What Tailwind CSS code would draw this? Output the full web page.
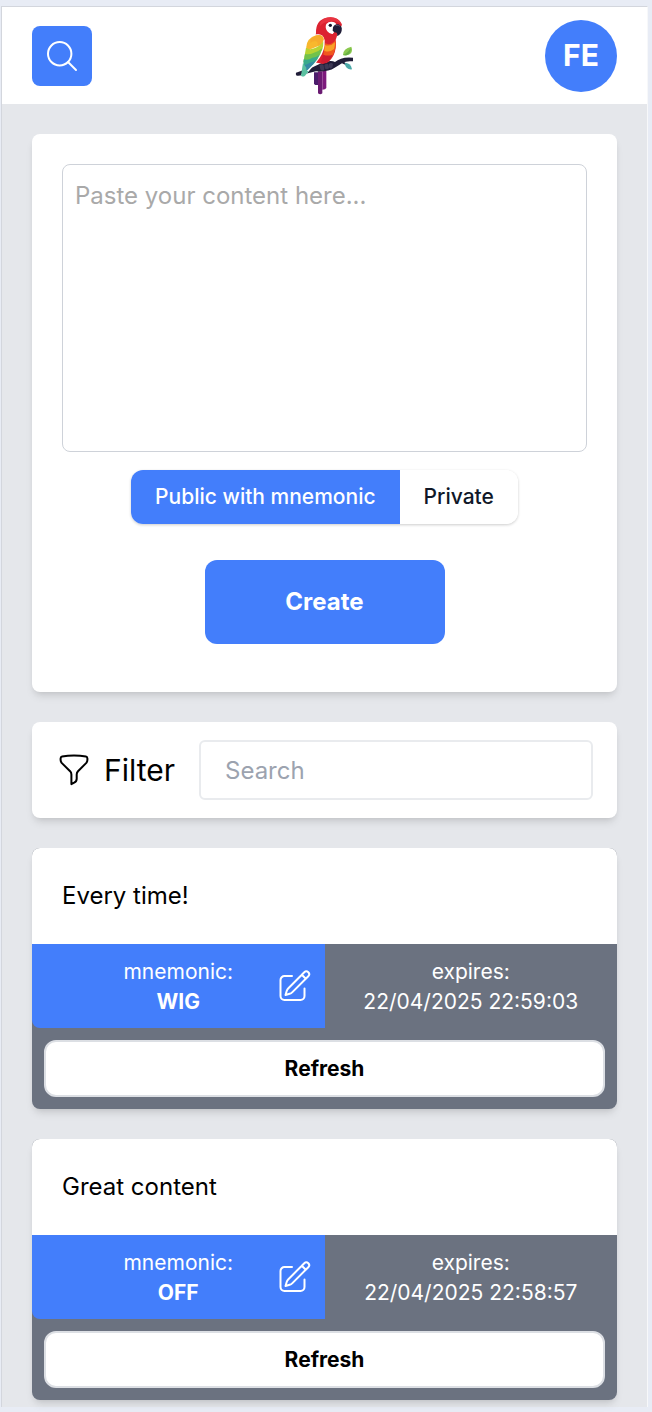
<!DOCTYPE html>
<html lang="en">
<head>
<meta charset="utf-8">
<meta name="viewport" content="width=device-width, initial-scale=1">
<title>Clipboard</title>
<script src="https://cdn.jsdelivr.net/npm/@tailwindcss/browser@4"></script>
</head>
<body class="bg-[#e8ecf5] pt-[6px] pr-1 pb-[5px] pl-px font-['Inter',sans-serif] text-black">
<div class="border-t border-l border-r border-t-[#d3d6dd] border-l-[#d3d6dd] border-r-[#f7f8fa] bg-[#e5e7eb] pb-[7px]">
  <header class="grid grid-cols-3 items-center bg-white px-[30px] py-px">
    <button type="button" aria-label="Search" class="grid size-[60px] place-items-center rounded-lg bg-[#437efb] text-white">
      <svg class="size-9" viewBox="0 0 36 36" fill="none" stroke="currentColor" stroke-width="2" stroke-linecap="round"><circle cx="15.7" cy="15.7" r="11.7"/><path d="M24 24l8 8"/></svg>
    </button>
    <a href="#" aria-label="Home" class="justify-self-center">
      <svg class="h-[95px] w-20" viewBox="0 0 240 285">
        <path d="M87 193h12v38h-8q-4-1-4-5z" fill="#4b1d6b"/><path d="M99 190h13v66q-6 6-13 0z" fill="#6a1b72"/><path d="M112 186h12v54q-2 5-12 5z" fill="#7d1a7d"/>
        <path d="M33 194q18-7 40-12l32-15q31-13 45-5 7-6 18-10 14-5 36-3v11q-20-2-31 4-12 8-24 15-19 13-56 11l-31 7q-14 8-27 6-4-5-2-9z" fill="#201d38"/>
        <path d="M174 160l8 5 6 4-4 3-15-7z" fill="#201d38"/>
        <path d="M174 141q0-20 25-25 6 16-5 23-10 5-20 2z" fill="#8bc94f"/><path d="M174 141q13-4 23-20 0 15-8 19-8 3-15 1z" fill="#68b045"/>
        <path d="M179 165q18-2 22 19-19 2-22-19z" fill="#4ba9a8"/>
        <path d="M93 74Q92 37 124 29q33-7 47 21l-12 25-7 21q3 25-6 45-10 22-32 27l-29-6z" fill="#dc2230"/>
        <path d="M106 43q14-19 42-14 17 4 23 21-18-16-40-9-18 2-26 13z" fill="#e83340"/>
        <path d="M120 106q18 8 32-10 2 22-5 38-9 22-22 30l-13-3z" fill="#f1581e"/>
        <path d="M119 111q18 6 31-8 0 12-3 20-15 12-29 5z" fill="#f9a126"/>
        <path d="M115 140q14 5 28 0-8 19-20 26l-15-4z" fill="#cf1c31"/>
        <path d="M124 48q8-9 21-6 9 2 10 12-3 16-12 24-9 1-16-8-8-11-3-22z" fill="#fff"/>
        <circle cx="136" cy="52" r="5" fill="#17142b"/>
        <path d="M144 58q5-11 16-9 13 6 10 19-2 11-14 16 2-6-1-10-8 0-12-6z" fill="#201d38"/><path d="M152 53q8-4 13 2" fill="none" stroke="#56516a" stroke-width="3"/>
        <path d="M65 113q3-27 30-34 20-4 24 18 2 28-15 53-16 22-47 56-7 0-9-4 8-12 9-40 4-25 8-49z" fill="#fff"/>
        <path d="M64 116q2-25 29-34 20-5 23 12l-6 16-47 19z" fill="#f8b82d"/>
        <path d="M76 94q10-11 27-13 12 1 13 13l-4 13-15 7q4-11-4-14-12-2-17 5z" fill="#f6ac2c"/>
        <path d="M63 119q9 7 20 3 19-3 32-22 1 14-4 27l-15 19-31 10-7-8z" fill="#b8d332"/>
        <path d="M60 138q14 3 25-3 16-4 27-15-4 19-16 35l-33 16-8-9z" fill="#72c24b"/>
        <path d="M56 154q14 4 26-5 12 0 21-9-6 17-19 30l-29 16z" fill="#38aa8c"/>
        <path d="M54 172q12-1 20-8 10 0 20-9-14 21-31 36l-10-4z" fill="#3589a4"/>
        <path d="M54 165l-6 38q6 5 12 0l12-14q-10 1-8-10z" fill="#5bc0a0"/>
        <path d="M103 172q7-7 13 0l2 13q-7 6-12-1zM118 171q8-7 13-1l1 11q-7 6-13 0zM132 168q8-6 12 1l-2 10q-7 5-10-1z" fill="#3d3854"/>
      </svg>
    </a>
    <button type="button" aria-label="Account FE" class="grid size-[72px] place-items-center justify-self-end rounded-full bg-[#437efb] text-[30px] font-bold text-white">FE</button>
  </header>

  <main class="flex flex-col gap-[30px] px-[30px] pt-[30px]">
    <form class="flex flex-col items-center rounded-lg bg-white px-[30px] pt-[30px] pb-12 shadow-[0_6px_9px_-2px_rgba(0,0,0,0.1),0_3px_6px_-3px_rgba(0,0,0,0.1)]">
      <textarea aria-label="Content" placeholder="Paste your content here..." class="block h-72 w-full resize-none rounded-lg border border-[#ced2d9] px-3 py-[13px] text-[24px] leading-[36px] placeholder:text-[#a9a9a9]"></textarea>
      <div class="mt-[18px] flex overflow-hidden rounded-xl text-[21px] leading-[30px] font-medium shadow-[0_1px_3px_rgba(0,0,0,0.2)]">
        <button type="button" aria-pressed="true" class="bg-[#437efb] px-6 py-3 text-white">Public with mnemonic</button>
        <button type="button" aria-pressed="false" class="bg-white px-6 py-3 text-gray-900">Private</button>
      </div>
      <button type="button" class="mt-9 h-[84px] w-60 rounded-xl bg-[#437efb] text-[24px] font-bold text-white">Create</button>
    </form>

    <section class="flex items-center rounded-lg bg-white px-6 py-[18px] shadow-[0_6px_9px_-2px_rgba(0,0,0,0.1),0_3px_6px_-3px_rgba(0,0,0,0.1)]">
      <svg class="size-9 shrink-0" viewBox="0 0 36 36" fill="none" stroke="currentColor" stroke-width="2" stroke-linejoin="round"><path d="M18 3.600c4.100 0 8 .3 11.900 1 .9.2 1.500.9 1.500 1.800v1.500c0 1.200-.5 2.300-1.300 3.200l-8.100 8.100c-.9.9-1.300 2-1.300 3.200v4.300c0 1.700-1 3.300-2.500 4l-2.800 1.400v-9.700c0-1.200-.5-2.300-1.300-3.200l-8.200-8.100c-.8-.9-1.300-2-1.300-3.200V6.400c0-.9.600-1.600 1.500-1.800 3.900-.7 7.900-1 11.900-1Z"/></svg>
      <label for="filter" class="ml-3 text-[30px] leading-[42px]">Filter</label>
      <input id="filter" type="text" placeholder="Search" class="ml-6 h-[60px] min-w-0 flex-1 rounded-md border-2 border-[#e9ebee] px-6 text-[24px] placeholder:text-[#9ca3af]">
    </section>

    <article class="overflow-hidden rounded-lg bg-[#6b7280] shadow-[0_6px_9px_-2px_rgba(0,0,0,0.1),0_3px_6px_-3px_rgba(0,0,0,0.1)]">
      <p class="bg-white p-[30px] text-[24px] leading-[36px]">Every time!</p>
      <div class="grid grid-cols-2 text-center text-[21px] leading-[30px] text-white">
        <div class="grid grid-cols-[1fr_auto_1fr] items-center rounded-bl-lg bg-[#437efb] pt-[13px] pb-[11px]">
          <p class="col-start-2">mnemonic:<br><strong class="font-bold">WIG</strong></p>
          <button type="button" aria-label="Edit mnemonic" class="mr-3 justify-self-end">
            <svg class="size-9" viewBox="0 0 36 36" fill="none" stroke="currentColor" stroke-width="2" stroke-linecap="round" stroke-linejoin="round"><path d="M15 7H7.500a4 4 0 0 0-4 4v16a4 4 0 0 0 4 4h16a4 4 0 0 0 4-4v-7.500M24.800 5.700l2.500-2.500a2.800 2.800 0 0 1 4 4L15.400 23.100a6.700 6.700 0 0 1-2.800 1.700L8.500 26l1.200-4a6.700 6.700 0 0 1 1.700-2.800zm0 0l4 4"/></svg>
          </button>
        </div>
        <p class="pt-[13px] pb-[11px]">expires:<br>22/04/2025 22:59:03</p>
      </div>
      <div class="p-3"><button type="button" class="h-[57px] w-full rounded-xl border-2 border-[#dcdfe4] bg-white text-[21px] font-bold">Refresh</button></div>
    </article>

    <article class="overflow-hidden rounded-lg bg-[#6b7280] shadow-[0_6px_9px_-2px_rgba(0,0,0,0.1),0_3px_6px_-3px_rgba(0,0,0,0.1)]">
      <p class="bg-white p-[30px] text-[24px] leading-[36px]">Great content</p>
      <div class="grid grid-cols-2 text-center text-[21px] leading-[30px] text-white">
        <div class="grid grid-cols-[1fr_auto_1fr] items-center rounded-bl-lg bg-[#437efb] pt-[13px] pb-[11px]">
          <p class="col-start-2">mnemonic:<br><strong class="font-bold">OFF</strong></p>
          <button type="button" aria-label="Edit mnemonic" class="mr-3 justify-self-end">
            <svg class="size-9" viewBox="0 0 36 36" fill="none" stroke="currentColor" stroke-width="2" stroke-linecap="round" stroke-linejoin="round"><path d="M15 7H7.500a4 4 0 0 0-4 4v16a4 4 0 0 0 4 4h16a4 4 0 0 0 4-4v-7.500M24.800 5.700l2.500-2.500a2.800 2.800 0 0 1 4 4L15.400 23.100a6.700 6.700 0 0 1-2.800 1.700L8.500 26l1.200-4a6.700 6.700 0 0 1 1.700-2.800zm0 0l4 4"/></svg>
          </button>
        </div>
        <p class="pt-[13px] pb-[11px]">expires:<br>22/04/2025 22:58:57</p>
      </div>
      <div class="p-3"><button type="button" class="h-[57px] w-full rounded-xl border-2 border-[#dcdfe4] bg-white text-[21px] font-bold">Refresh</button></div>
    </article>
  </main>
</div>
</body>
</html>
